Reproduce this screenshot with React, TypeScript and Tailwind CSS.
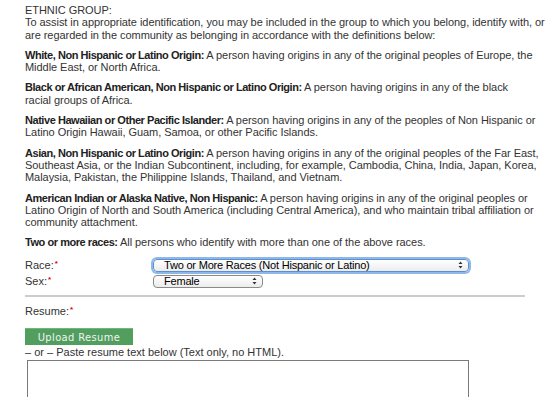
import React from 'react';

const definitions = [
  {
    term: 'White, Non Hispanic or Latino Origin:',
    lines: [' A person having origins in any of the original peoples of Europe, the', 'Middle East, or North Africa.'],
  },
  {
    term: 'Black or African American, Non Hispanic or Latino Origin:',
    lines: [' A person having origins in any of the black', 'racial groups of Africa.'],
  },
  {
    term: 'Native Hawaiian or Other Pacific Islander:',
    lines: [' A person having origins in any of the peoples of Non Hispanic or', 'Latino Origin Hawaii, Guam, Samoa, or other Pacific Islands.'],
  },
  {
    term: 'Asian, Non Hispanic or Latino Origin:',
    lines: [
      ' A person having origins in any of the original peoples of the Far East,',
      'Southeast Asia, or the Indian Subcontinent, including, for example, Cambodia, China, India, Japan, Korea,',
      'Malaysia, Pakistan, the Philippine Islands, Thailand, and Vietnam.',
    ],
  },
  {
    term: 'American Indian or Alaska Native, Non Hispanic:',
    lines: [
      ' A person having origins in any of the original peoples or',
      'Latino Origin of North and South America (including Central America), and who maintain tribal affiliation or',
      'community attachment.',
    ],
  },
  {
    term: 'Two or more races:',
    lines: [' All persons who identify with more than one of the above races.'],
  },
];

function Req() {
  return <span className="text-[#e00000] text-[8px] align-top leading-[9px] font-bold ml-[1px]">*</span>;
}

function Arrows() {
  return (
    <svg width="5" height="8" viewBox="0 0 5 8" className="shrink-0">
      <path d="M2.5 0.5 L4.5 3 L0.5 3 Z" fill="#333" />
      <path d="M0.5 5 L4.5 5 L2.5 7.5 Z" fill="#333" />
    </svg>
  );
}

function MacSelect({ value, width, focused }: { value: string; width: string; focused?: boolean }) {
  return (
    <div
      className={`${width} h-[13px] flex items-center justify-between pl-[10px] pr-[5px] rounded-[4px] border bg-gradient-to-b from-white to-[#ececec] ${
        focused ? 'border-[#5b8fd0] shadow-[0_0_0_2px_#8fb8ea]' : 'border-[#8a8a8a]'
      }`}
    >
      <span className="text-[11px] leading-none text-black tracking-[-0.2px] font-['Liberation_Sans',Arial,sans-serif]">
        {value}
      </span>
      <Arrows />
    </div>
  );
}

export default function App() {
  return (
    <div className="w-[547px] h-[397px] overflow-hidden bg-white text-[#333] text-[11px] leading-[12.3px] font-['Liberation_Sans',Arial,sans-serif]">
      <div className="pl-[25px] pt-[4px]">
        <p className="mb-[8px] whitespace-nowrap tracking-[-0.05px]">
          ETHNIC GROUP:
          <br />
          To assist in appropriate identification, you may be included in the group to which you belong, identify with, or
          <br />
          are regarded in the community as belonging in accordance with the definitions below:
        </p>

        {definitions.map((d) => (
          <p key={d.term} className="mb-[8px] whitespace-nowrap tracking-[-0.05px]">
            <b className="text-[#222] tracking-[-0.45px]">{d.term}</b>
            {d.lines.map((l, i) => (
              <React.Fragment key={i}>
                {i > 0 && <br />}
                {l}
              </React.Fragment>
            ))}
          </p>
        ))}

        {/* Race / Sex */}
        <div className="mt-[10px] flex flex-col gap-[3px]">
          <div className="flex items-center">
            <span className="w-[128px]">
              Race:<Req />
            </span>
            <MacSelect value="Two or More Races (Not Hispanic or Latino)" width="w-[316px]" focused />
          </div>
          <div className="flex items-center">
            <span className="w-[128px]">
              Sex:<Req />
            </span>
            <MacSelect value="Female" width="w-[110px]" />
          </div>
        </div>

        <div className="mt-[7px] w-[500px] h-[2px] bg-[#cccccc]" />

        <div className="mt-[8px]">
          Resume:<Req />
        </div>

        <button className="mt-[11px] w-[108px] h-[17px] bg-[#519e5e] border-t border-[#6db777] text-[#f2f2f2] text-[11px] leading-[15px] tracking-[0.4px] font-['DejaVu_Sans_Condensed','DejaVu_Sans',sans-serif] block">
          Upload Resume
        </button>
        <div className="mt-[1px]">– or – Paste resume text below (Text only, no HTML).</div>
        <textarea className="mt-[2px] ml-[2px] w-[442px] h-[60px] border border-[#7a7a7a] resize-none outline-none block" />
      </div>
    </div>
  );
}
